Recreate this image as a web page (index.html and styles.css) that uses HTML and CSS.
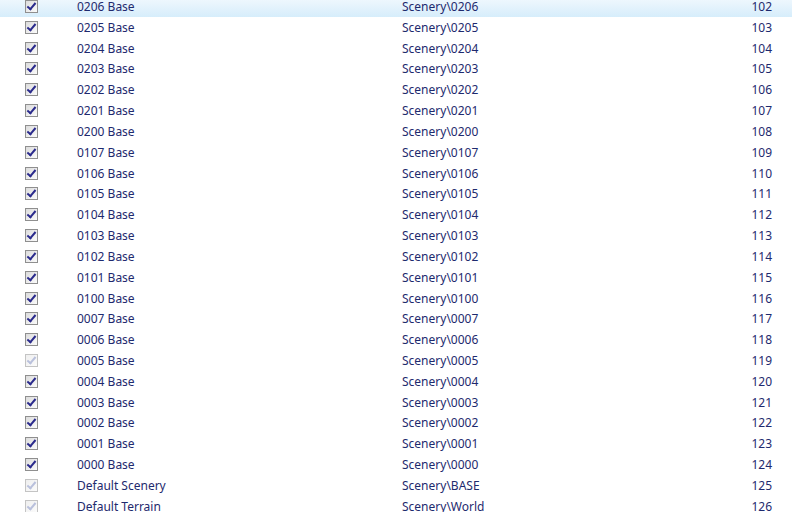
FILE: index.html
```html
<!DOCTYPE html>
<html>
<head>
<meta charset="utf-8">
<link rel="stylesheet" href="styles.css">
</head>
<body>
<div class="list">
  <div class="row sel"><span class="cb"></span><span class="name">0206 Base</span><span class="path">Scenery\0206</span><span class="num">102</span></div>
  <div class="row"><span class="cb"></span><span class="name">0205 Base</span><span class="path">Scenery\0205</span><span class="num">103</span></div>
  <div class="row"><span class="cb"></span><span class="name">0204 Base</span><span class="path">Scenery\0204</span><span class="num">104</span></div>
  <div class="row"><span class="cb"></span><span class="name">0203 Base</span><span class="path">Scenery\0203</span><span class="num">105</span></div>
  <div class="row"><span class="cb"></span><span class="name">0202 Base</span><span class="path">Scenery\0202</span><span class="num">106</span></div>
  <div class="row"><span class="cb"></span><span class="name">0201 Base</span><span class="path">Scenery\0201</span><span class="num">107</span></div>
  <div class="row"><span class="cb"></span><span class="name">0200 Base</span><span class="path">Scenery\0200</span><span class="num">108</span></div>
  <div class="row"><span class="cb"></span><span class="name">0107 Base</span><span class="path">Scenery\0107</span><span class="num">109</span></div>
  <div class="row"><span class="cb"></span><span class="name">0106 Base</span><span class="path">Scenery\0106</span><span class="num">110</span></div>
  <div class="row"><span class="cb"></span><span class="name">0105 Base</span><span class="path">Scenery\0105</span><span class="num">111</span></div>
  <div class="row"><span class="cb"></span><span class="name">0104 Base</span><span class="path">Scenery\0104</span><span class="num">112</span></div>
  <div class="row"><span class="cb"></span><span class="name">0103 Base</span><span class="path">Scenery\0103</span><span class="num">113</span></div>
  <div class="row"><span class="cb"></span><span class="name">0102 Base</span><span class="path">Scenery\0102</span><span class="num">114</span></div>
  <div class="row"><span class="cb"></span><span class="name">0101 Base</span><span class="path">Scenery\0101</span><span class="num">115</span></div>
  <div class="row"><span class="cb"></span><span class="name">0100 Base</span><span class="path">Scenery\0100</span><span class="num">116</span></div>
  <div class="row"><span class="cb"></span><span class="name">0007 Base</span><span class="path">Scenery\0007</span><span class="num">117</span></div>
  <div class="row"><span class="cb"></span><span class="name">0006 Base</span><span class="path">Scenery\0006</span><span class="num">118</span></div>
  <div class="row"><span class="cb dis"></span><span class="name">0005 Base</span><span class="path">Scenery\0005</span><span class="num">119</span></div>
  <div class="row"><span class="cb"></span><span class="name">0004 Base</span><span class="path">Scenery\0004</span><span class="num">120</span></div>
  <div class="row"><span class="cb"></span><span class="name">0003 Base</span><span class="path">Scenery\0003</span><span class="num">121</span></div>
  <div class="row"><span class="cb"></span><span class="name">0002 Base</span><span class="path">Scenery\0002</span><span class="num">122</span></div>
  <div class="row"><span class="cb"></span><span class="name">0001 Base</span><span class="path">Scenery\0001</span><span class="num">123</span></div>
  <div class="row"><span class="cb"></span><span class="name">0000 Base</span><span class="path">Scenery\0000</span><span class="num">124</span></div>
  <div class="row"><span class="cb dis"></span><span class="name">Default Scenery</span><span class="path">Scenery\BASE</span><span class="num">125</span></div>
  <div class="row"><span class="cb dis"></span><span class="name">Default Terrain</span><span class="path">Scenery\World</span><span class="num">126</span></div>
</div>
</body>
</html>
```
FILE: styles.css
```css
html, body {
  margin: 0;
  padding: 0;
  background: #ffffff;
  overflow: hidden;
}
.list {
  margin-top: -4px;
  font-family: "Noto Sans", "Liberation Sans", sans-serif;
  font-size: 12px;
  color: #1e2a6e;
}
.row {
  display: flex;
  align-items: center;
  height: 20.83px;
  white-space: nowrap;
}
.row.sel {
  background: linear-gradient(#f3f9fe, #d6edfb);
}
.cb {
  box-sizing: border-box;
  width: 13px;
  height: 13px;
  margin-left: 25px;
  border: 1px solid #8f8f8f;
  background: linear-gradient(135deg, #dcdcdc, #fbfbfb);
  position: relative;
  flex: none;
}
.cb::after {
  content: "";
  position: absolute;
  left: 3px;
  top: 0px;
  width: 3px;
  height: 7px;
  border-right: 2px solid #2a2a8c;
  border-bottom: 2px solid #2a2a8c;
  transform: rotate(40deg);
  transform-origin: center;
}
.cb.dis {
  border-color: #c4c4c4;
  background: linear-gradient(135deg, #efefef, #fbfbfb);
}
.cb.dis::after {
  border-color: #b9c0dc;
}
.name {
  margin-left: 39px;
  width: 325px;
  flex: none;
}
.path {
  width: 300px;
  flex: none;
}
.num {
  width: 70px;
  text-align: right;
  flex: none;
}
```
